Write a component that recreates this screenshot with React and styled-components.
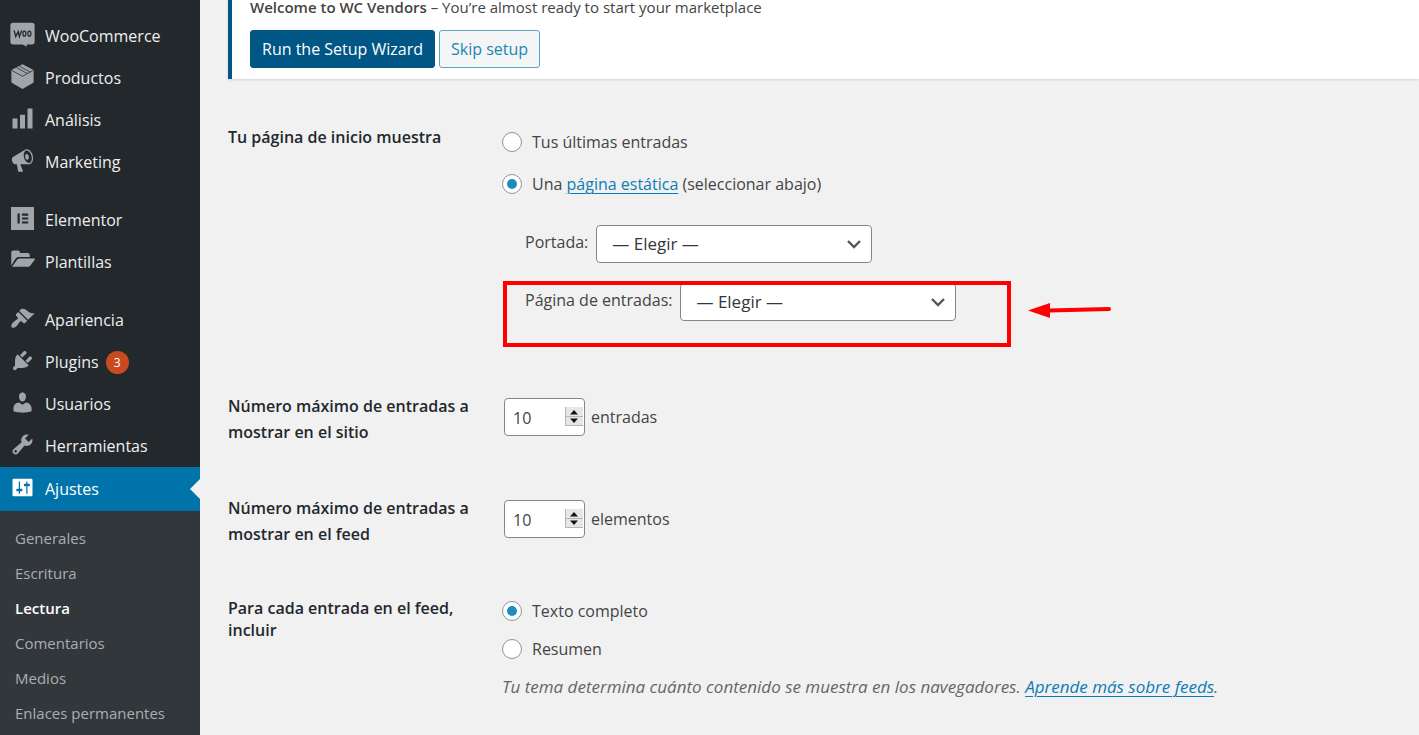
import { useState } from "react";
import styled, { createGlobalStyle, css } from "styled-components";

const GlobalStyle = createGlobalStyle`
    *, *::before, *::after {
        box-sizing: border-box;
    }

    body {
        margin: 0;
        background: #f1f1f1;
        color: #444;
        font-family: "Open Sans", "Noto Sans", sans-serif;
        font-size: 16px;
        line-height: 24px;
    }

    input, select, button {
        font: inherit;
        color: inherit;
    }
`;

const Layout = styled.div`
    display: flex;
    min-height: 100vh;
`;

const Sidebar = styled.nav`
    display: flex;
    flex-direction: column;
    flex: 0 0 200px;
    padding-top: 15px;
    background: #23282d;
`;

const MenuGroup = styled.ul`
    list-style: none;
    margin: 0;
    padding: 0;

    & + & {
        margin-top: 16px;
    }
`;

const MenuLink = styled.a`
    position: relative;
    display: flex;
    align-items: center;
    gap: 10px;
    height: ${props => props.$active ? 44 : 42}px;
    padding-left: 10px;
    color: ${props => props.$active ? "#fff" : "#eee"};
    text-decoration: none;

    & > svg {
        flex: none;
        width: 25px;
        height: 25px;
        margin-bottom: 3px;
        fill: ${props => props.$active ? "#fff" : "#a0a5aa"};
    }

    ${props => props.$active && css`
        background: #0073aa;

        &::after {
            content: "";
            position: absolute;
            right: 0;
            border: 10px solid transparent;
            border-left-width: 0;
            border-right-color: #f1f1f1;
        }
    `}
`;

const Badge = styled.span`
    width: 23px;
    height: 23px;
    margin-left: -3px;
    border-radius: 50%;
    background: #ca4a1f;
    color: #fff;
    font-size: 12px;
    line-height: 23px;
    text-align: center;
`;

const Submenu = styled.ul`
    flex: 1;
    list-style: none;
    margin: 0;
    padding: 10px 0 4px;
    background: #32373c;
`;

const SubmenuLink = styled.a`
    display: block;
    padding-left: 15px;
    color: ${props => props.$current ? "#fff" : "#a9aeb2"};
    font-size: 15px;
    font-weight: ${props => props.$current ? 600 : 400};
    line-height: 35px;
    text-decoration: none;
`;

const Main = styled.main`
    flex: 1;
    min-width: 0;
    padding-left: 28px;
`;

const Notice = styled.section`
    padding: 0 0 11px 18px;
    border-left: 4px solid #005684;
    background: #fff;
    box-shadow: 0 1px 2px rgba(0, 0, 0, 0.12);

    & > p {
        margin: 0 0 16px;
        font-size: 15px;
        line-height: 14px;
    }

    & strong {
        font-weight: 600;
    }
`;

const Actions = styled.div`
    display: flex;
    gap: 4px;
`;

const Button = styled.button`
    height: 38px;
    padding: 0 11px;
    border: 1px solid ${props => props.$primary ? "#005684" : "#5ba5c9"};
    border-radius: 3px;
    background: ${props => props.$primary ? "#005684" : "#f3f5f6"};
    color: ${props => props.$primary ? "#fff" : "#1c85b5"};
    white-space: nowrap;
`;

const Form = styled.form`
    display: flex;
    flex-direction: column;
    gap: 50px;
    padding-top: 47px;
`;

const Row = styled.div`
    display: grid;
    grid-template-columns: 250px 1fr;
    column-gap: 24px;
`;

const Heading = styled.div`
    color: #23282d;
    font-weight: 600;
    line-height: ${props => props.$tight ? 22 : 26}px;
`;

const Options = styled.div`
    display: flex;
    flex-direction: column;
    gap: 10px;
`;

const RadioLabel = styled.label`
    display: flex;
    align-items: center;
    gap: 10px;
    height: ${props => props.$tight ? 28 : 32}px;
`;

const Radio = styled.input.attrs({ type: "radio" })`
    appearance: none;
    display: grid;
    place-items: center;
    width: 20px;
    height: 20px;
    margin: 0;
    border: 1px solid #8a949d;
    border-radius: 50%;
    background: #fff;

    &:checked::before {
        content: "";
        width: 10px;
        height: 10px;
        border-radius: 50%;
        background: #1e8cbe;
    }
`;

const Link = styled.a`
    color: #0b7cb5;
    text-decoration-thickness: 1px;
    text-underline-offset: 3px;
`;

const Pages = styled.div`
    display: flex;
    flex-direction: column;
    gap: 20px;
    padding: 15px 0 22px 23px;
`;

const PageField = styled.div`
    position: relative;
    display: flex;
    align-items: center;
    gap: 8px;

    & > label {
        margin-bottom: 4px;
    }
`;

const SelectBox = styled.div`
    display: grid;
    align-items: center;
    width: 276px;

    & > * {
        grid-area: 1 / 1;
    }

    & > svg {
        justify-self: end;
        width: 16px;
        margin-right: 10px;
        fill: none;
        stroke: #555;
        stroke-width: 2.4;
        pointer-events: none;
    }
`;

const Select = styled.select`
    appearance: none;
    width: 100%;
    height: 38px;
    padding: 0 30px 0 15px;
    border: 1px solid #7e8993;
    border-radius: 4px;
    background: #fff;
    color: #32373c;
    font-size: 17px;
`;

const Highlight = styled.div`
    position: absolute;
    top: -2px;
    left: -22px;
    width: 508px;
    height: 66px;
    border: 4px solid #f00;
    pointer-events: none;
`;

const Arrow = styled.svg`
    position: absolute;
    top: 18px;
    left: 502px;
    width: 86px;
    height: 18px;
`;

const NumberField = styled.div`
    display: flex;
    align-items: center;
    align-self: start;
    gap: 6px;
    padding-top: 5px;
    padding-left: 2px;
`;

const NumberBox = styled.div`
    display: grid;
    align-items: center;
    width: 81px;

    & > * {
        grid-area: 1 / 1;
    }

    & > svg {
        justify-self: end;
        width: 18px;
        height: 19px;
        margin: 0 2px 2px 0;
        pointer-events: none;
    }
`;

const NumberInput = styled.input.attrs({ type: "number" })`
    appearance: textfield;
    width: 100%;
    height: 38px;
    padding: 2px 20px 0 8px;
    border: 1px solid #7e8993;
    border-radius: 4px;
    background: #fff;

    &::-webkit-inner-spin-button {
        appearance: none;
    }
`;

const Description = styled.p`
    margin: 2px 0 0;
    color: #666;
    font-size: 17px;
    font-style: italic;
`;

const icons = {
    woo: (
        <>
            <path d="M2.5.5h15A2.2 2.2 0 0 1 19.7 2.700v13a2.200 2.200 0 0 1-2.200 2.200h-4.200l.2 1.900-3.500-1.900H2.500A2.200 2.200 0 0 1 .3 15.700v-13A2.200 2.200 0 0 1 2.500.5z" />
            <path d="M3.300 6.700l1.300 5 2-4 .9 4 1.900-5" fill="none" stroke="#23282d" strokeWidth="1.100" />
            <ellipse cx="11.500" cy="9.300" rx="1.200" ry="2" fill="none" stroke="#23282d" />
            <ellipse cx="15.500" cy="9.300" rx="1.200" ry="2" fill="none" stroke="#23282d" />
        </>
    ),
    box: (
        <>
            <path d="M10 .2l8.900 4.600v10L10 20l-8.900-5.200v-10z" />
            <path d="M1.200 5L10 9.800 18.800 5M5.200 2.900l8.700 4.700M7.400 1.700l8.700 4.700" fill="none" stroke="#23282d" strokeWidth=".6" />
        </>
    ),
    chart: <path d="M18 18V2h-4v16h4zm-6 0V7H8v11h4zm-6 0v-8H2v8h4z" />,
    megaphone: <path d="M18.150 5.940c.46 1.620.38 3.220-.02 4.480-.42 1.280-1.260 2.180-2.300 2.480-.16.06-.26.06-.4.06-.06.02-.12.02-.18.02-.06.02-.14.02-.22.02h-6.800l2.220 5.500c.02.14-.06.26-.14.34-.08.1-.24.16-.34.16H6.950c-.1 0-.26-.06-.34-.16-.08-.08-.16-.2-.14-.34l-1-5.500H4.250l-.02-.02c-.5.06-1.080-.18-1.540-.62s-.88-1.080-1.060-1.880c-.24-.8-.2-1.560-.02-2.200.18-.62.58-1.080 1.060-1.300l.02-.02 9-5.400c.1-.06.18-.1.24-.16.06-.04.14-.08.24-.12.16-.08.28-.12.5-.18 1.040-.3 2.240.1 3.220.98s1.840 2.240 2.260 3.860zm-2.580 5.980h-.02c.4-.1.74-.34 1.040-.7.58-.7.86-1.760.86-3.040 0-.64-.1-1.300-.28-1.980-.34-1.360-1.020-2.500-1.780-3.240s-1.680-1.100-2.460-.88c-.82.22-1.400.96-1.700 2-.32 1.040-.28 2.360.06 3.720.38 1.360 1 2.500 1.800 3.240.78.74 1.620 1.100 2.480.88zm-2.540-7.080c.22-.04.42-.02.62.04.38.16.76.48 1.020 1s.42 1.200.42 1.780c0 .3-.04.56-.12.8-.18.48-.44.84-.86.94-.34.1-.8-.06-1.140-.4s-.64-.86-.78-1.500c-.18-.62-.12-1.240.02-1.720s.48-.84.82-.94z" />,
    elementor: <path fillRule="evenodd" d="M.8.8h18.400v18.400H.8zM6 6v8h1.800V6zm3.600 0v1.700h5V6zm0 3.150v1.700h5v-1.700zm0 3.150V14h5v-1.700z" />,
    folder: (
        <>
            <path d="M1 14V3.800C1 2.700 1.700 2 2.800 2h3.400c1.100 0 1.800.7 1.800 1.800V4h6c1.100 0 1.800.7 1.800 1.800v1.400H7.200c-1.200 0-2.200.5-3 1.500z" />
            <path d="M1.600 15l4-5.500c.5-.8 1.200-1.200 2.100-1.200h11.700c.6 0 .8.5.4 1l-3.500 4.700c-.5.7-1.200 1-2 1z" />
        </>
    ),
    appearance: <path d="M14.480 11.060L7.410 3.990l1.500-1.500c.5-.56 2.300-.47 3.510.32 1.210.8 1.430 1.280 2.910 2.100 1.180.64 2.450 1.260 4.450.85zm-.71.71L6.700 4.700 4.930 6.470c-.39.39-.39 1.020 0 1.410l1.060 1.060c.39.39.39 1.030 0 1.420-.6.6-1.430 1.110-2.210 1.690-.35.26-.7.53-1.010.84C1.430 14.230.4 16.080 1.400 17.070c.99 1 2.840-.03 4.180-1.360.31-.31.58-.66.85-1.020.57-.78 1.080-1.610 1.690-2.210.39-.39 1.020-.39 1.410 0l1.060 1.060c.39.39 1.020.39 1.410 0z" />,
    plugins: <path d="M13.110 4.360L9.870 7.600 8 5.730l3.240-3.240c.35-.34 1.050-.2 1.560.32.52.51.66 1.210.31 1.550zm-8 1.770l.91-1.120 9.010 9.010-1.190.84c-.71.71-2.630 1.160-3.820 1.160H6.140L4.900 17.260c-.59.59-1.540.59-2.120 0-.59-.58-.59-1.530 0-2.120l1.240-1.240v-3.880c0-1.130.4-3.190 1.090-3.890zm7.260 3.970l3.240-3.240c.34-.35 1.040-.21 1.550.31.52.51.66 1.210.31 1.550l-3.240 3.250z" />,
    users: <path d="M10 9.250c-2.270 0-2.730-3.440-2.730-3.440C7 4.020 7.820 2 9.970 2c2.160 0 2.980 2.020 2.710 3.810 0 0-.41 3.440-2.680 3.440zm0 2.570L12.720 10c2.390 0 4.520 2.330 4.520 4.530v2.490s-3.650 1.130-7.240 1.130c-3.650 0-7.240-1.130-7.240-1.130v-2.490c0-2.250 1.940-4.480 4.470-4.480z" />,
    tools: <path d="M16.680 9.770c-1.340 1.340-3.300 1.670-4.950.99l-5.410 6.520c-.99.99-2.590.99-3.580 0s-.99-2.590 0-3.570l6.520-5.420c-.68-1.650-.35-3.610.99-4.950 1.280-1.280 3.120-1.620 4.720-1.060l-2.890 2.890 2.820 2.820 2.860-2.870c.53 1.580.18 3.390-1.080 4.650zM3.810 16.210c.4.39 1.040.39 1.430 0 .4-.4.4-1.040 0-1.430-.39-.4-1.030-.4-1.430 0-.39.39-.39 1.030 0 1.430z" />,
    settings: <path d="M18 16V4c0-.55-.45-1-1-1H3c-.55 0-1 .45-1 1v12c0 .55.45 1 1 1h14c.55 0 1-.45 1-1zM8 11h1c.55 0 1 .45 1 1s-.45 1-1 1H8v1.500c0 .28-.22.5-.5.5s-.5-.22-.5-.5V13H6c-.55 0-1-.45-1-1s.45-1 1-1h1V5.500c0-.28.22-.5.5-.5s.5.22.5.5V11zm5-2h-1c-.55 0-1-.45-1-1s.45-1 1-1h1V5.500c0-.28.22-.5.5-.5s.5.22.5.5V7h1c.55 0 1 .45 1 1s-.45 1-1 1h-1v5.500c0 .28-.22.5-.5.5s-.5-.22-.5-.5V9z" />,
};

const menu = [
    [
        { label: "WooCommerce", icon: "woo" },
        { label: "Productos", icon: "box" },
        { label: "Análisis", icon: "chart" },
        { label: "Marketing", icon: "megaphone" },
    ],
    [
        { label: "Elementor", icon: "elementor" },
        { label: "Plantillas", icon: "folder" },
    ],
    [
        { label: "Apariencia", icon: "appearance" },
        { label: "Plugins", icon: "plugins", count: 3 },
        { label: "Usuarios", icon: "users" },
        { label: "Herramientas", icon: "tools" },
        { label: "Ajustes", icon: "settings", active: true },
    ],
];

const submenu = ["Generales", "Escritura", "Lectura", "Comentarios", "Medios", "Enlaces permanentes"];

const PageSelect = ({ id }) => (
    <SelectBox>
        <Select id={id}>
            <option>— Elegir —</option>
        </Select>
        <svg viewBox="0 0 16 10" aria-hidden="true">
            <path d="M2 2l6 6 6-6" />
        </svg>
    </SelectBox>
);

const PostCount = ({ id, unit }) => (
    <NumberField>
        <NumberBox>
            <NumberInput id={id} defaultValue={10} min={1} />
            <svg viewBox="0 0 18 19" aria-hidden="true">
                <path d="M0 0h18v19H0z" fill="#e6e6e6" />
                <path d="M0 9.500h18M.5 0v18.500H18" fill="none" stroke="#b5b5b5" />
                <path d="M5 7.500l4-4.500 4 4.500zM5 11.500l4 4.500 4-4.500z" fill="#111" />
            </svg>
        </NumberBox>
        <span>{unit}</span>
    </NumberField>
);

const App = () => {
    const [front, setFront] = useState("page");
    const [feed, setFeed] = useState("full");

    return (
        <Layout>
            <GlobalStyle />
            <Sidebar>
                {menu.map((group, i) =>
                    <MenuGroup key={i}>
                        {group.map(({ label, icon, count, active }) =>
                            <li key={label}>
                                <MenuLink href="#" $active={active}>
                                    <svg viewBox="0 0 20 20" aria-hidden="true">{icons[icon]}</svg>
                                    <span>{label}</span>
                                    {count && <Badge>{count}</Badge>}
                                </MenuLink>
                            </li>
                        )}
                    </MenuGroup>
                )}
                <Submenu>
                    {submenu.map(label =>
                        <li key={label}>
                            <SubmenuLink href="#" $current={label === "Lectura"}>{label}</SubmenuLink>
                        </li>
                    )}
                </Submenu>
            </Sidebar>
            <Main>
                <Notice>
                    <p><strong>Welcome to WC Vendors</strong> – You’re almost ready to start your marketplace</p>
                    <Actions>
                        <Button type="button" $primary>Run the Setup Wizard</Button>
                        <Button type="button">Skip setup</Button>
                    </Actions>
                </Notice>
                <Form>
                    <Row>
                        <Heading $tight>Tu página de inicio muestra</Heading>
                        <Options>
                            <RadioLabel>
                                <Radio name="front" checked={front === "posts"} onChange={() => setFront("posts")} />
                                <span>Tus últimas entradas</span>
                            </RadioLabel>
                            <RadioLabel>
                                <Radio name="front" checked={front === "page"} onChange={() => setFront("page")} />
                                <span>Una <Link href="#">página estática</Link> (seleccionar abajo)</span>
                            </RadioLabel>
                            <Pages>
                                <PageField>
                                    <label htmlFor="page_on_front">Portada:</label>
                                    <PageSelect id="page_on_front" />
                                </PageField>
                                <PageField>
                                    <label htmlFor="page_for_posts">Página de entradas:</label>
                                    <PageSelect id="page_for_posts" />
                                    <Highlight />
                                    <Arrow viewBox="0 0 86 18" aria-hidden="true">
                                        <path d="M22 9.500L82 8" stroke="#f00" strokeWidth="4" strokeLinecap="round" />
                                        <path d="M1 9.500L23 2v15z" fill="#f00" />
                                    </Arrow>
                                </PageField>
                            </Pages>
                        </Options>
                    </Row>
                    <Row>
                        <Heading as="label" htmlFor="posts_per_page">Número máximo de entradas a mostrar en el sitio</Heading>
                        <PostCount id="posts_per_page" unit="entradas" />
                    </Row>
                    <Row>
                        <Heading as="label" htmlFor="posts_per_rss">Número máximo de entradas a mostrar en el feed</Heading>
                        <PostCount id="posts_per_rss" unit="elementos" />
                    </Row>
                    <Row>
                        <Heading $tight>Para cada entrada en el feed, incluir</Heading>
                        <Options>
                            <RadioLabel $tight>
                                <Radio name="feed" checked={feed === "full"} onChange={() => setFeed("full")} />
                                <span>Texto completo</span>
                            </RadioLabel>
                            <RadioLabel $tight>
                                <Radio name="feed" checked={feed === "summary"} onChange={() => setFeed("summary")} />
                                <span>Resumen</span>
                            </RadioLabel>
                            <Description>
                                Tu tema determina cuánto contenido se muestra en los navegadores. <Link href="#">Aprende más sobre feeds</Link>.
                            </Description>
                        </Options>
                    </Row>
                </Form>
            </Main>
        </Layout>
    );
};

export default App;
